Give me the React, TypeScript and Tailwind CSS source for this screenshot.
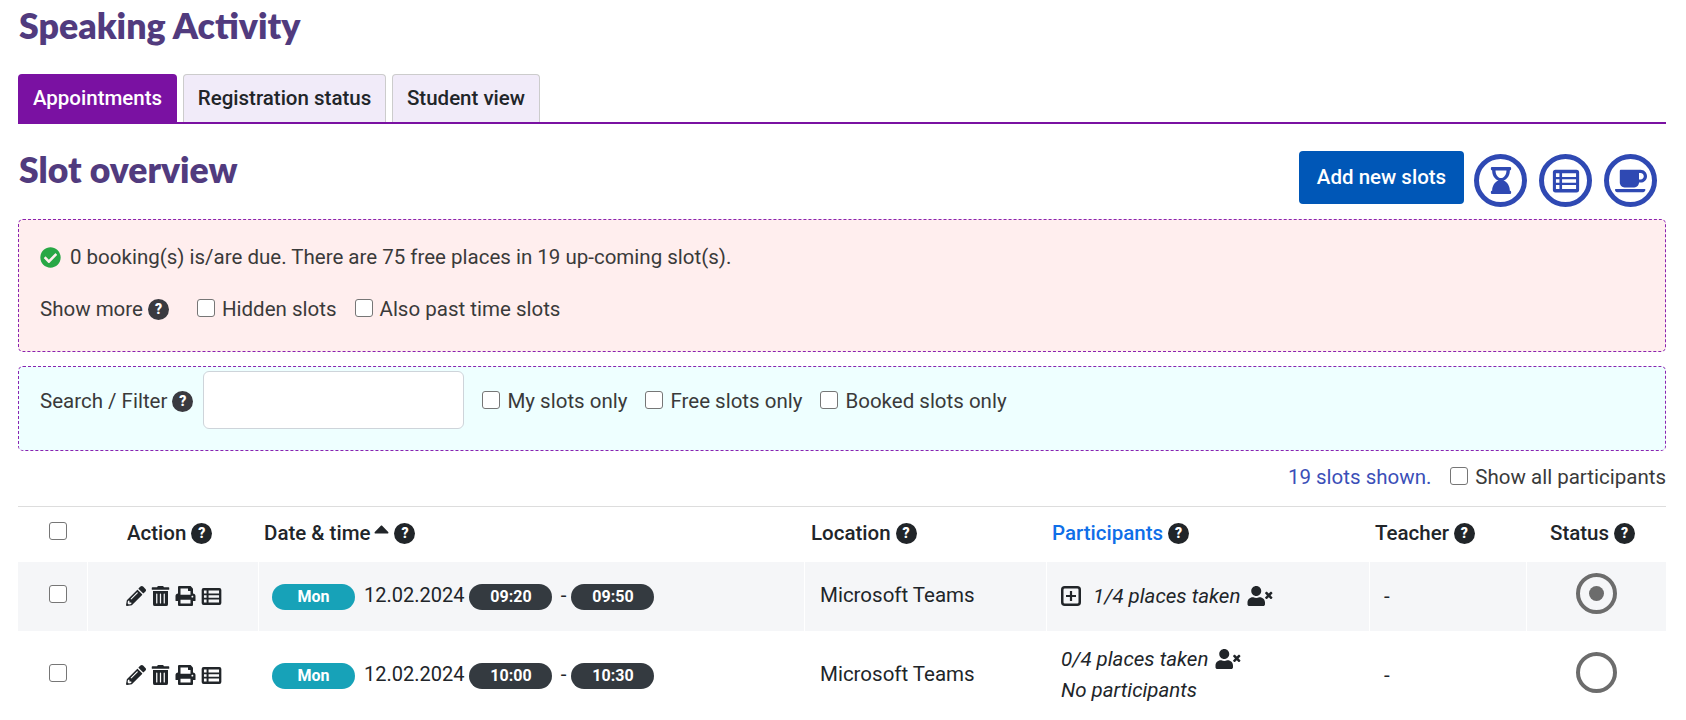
import React from 'react';
import {
  FaCheckCircle,
  FaCoffee,
  FaHourglassEnd,
  FaPencilAlt,
  FaPrint,
  FaTrashAlt,
  FaUserTimes,
  FaCaretUp,
} from 'react-icons/fa';

const TableIcon: React.FC<{ className?: string }> = ({ className }) => (
  <svg viewBox="0 0 512 512" className={className} fill="currentColor">
    <path
      fillRule="evenodd"
      d="M64 48h384a48 48 0 0 1 48 48v320a48 48 0 0 1-48 48H64a48 48 0 0 1-48-48V96a48 48 0 0 1 48-48zM72 112v72h64v-72zM184 112v72h256v-72zM72 224v64h64v-64zM184 224v64h256v-64zM72 328v72h64v-72zM184 328v72h256v-72z"
    />
  </svg>
);

const PlusBox: React.FC = () => (
  <svg viewBox="0 0 20 20" className="w-[20px] h-[20px] mr-[12px] shrink-0" fill="none" stroke="currentColor">
    <rect x="1.25" y="1.25" width="17.5" height="17.5" rx="2.5" strokeWidth="2.5" />
    <path d="M10 5v10M5 10h10" strokeWidth="2.2" />
  </svg>
);

const Check: React.FC = () => (
  <input
    type="checkbox"
    className="appearance-none w-[18px] h-[18px] shrink-0 bg-white border border-[#767676] rounded-[3px]"
  />
);

const Help: React.FC<{ dark?: boolean }> = ({ dark }) => (
  <span
    className={`w-[21px] h-[21px] shrink-0 rounded-full flex items-center justify-center text-white not-italic font-black text-[14px] leading-none ${
      dark ? 'bg-[#212529]' : 'bg-[#3a3a40]'
    }`}
  >
    ?
  </span>
);

const CheckLabel: React.FC<{ label: string }> = ({ label }) => (
  <label className="flex items-center gap-[7px]">
    <span className="flex mb-[3px]">
      <Check />
    </span>
    <span>{label}</span>
  </label>
);

const RoundIcon: React.FC<{ children: React.ReactNode }> = ({ children }) => (
  <div className="w-[53px] h-[53px] rounded-full border-[5px] border-[#2f49b3] text-[#2f49b3] flex items-center justify-center">
    {children}
  </div>
);

const Pill: React.FC<{ text: string; teal?: boolean }> = ({ text, teal }) => (
  <span
    className={`w-[83px] h-[26px] rounded-full flex items-center justify-center text-white font-bold text-[16px] ${
      teal ? 'bg-[#17a2b8]' : 'bg-[#343a40]'
    }`}
  >
    {text}
  </span>
);

const HeaderCell: React.FC<{ label: string; className?: string; children?: React.ReactNode; blue?: boolean }> = ({
  label,
  className,
  children,
  blue,
}) => (
  <div className={`flex items-center font-medium pb-[3px] ${className ?? ''}`}>
    <span className={`mb-[1px] ${blue ? 'text-[#0f6fe8]' : ''}`}>{label}</span>
    {children}
    <span className="ml-[5px]">
      <Help dark />
    </span>
  </div>
);

type Slot = {
  from: string;
  to: string;
  taken: string;
  open: boolean;
};

const SlotRow: React.FC<{ slot: Slot; shaded?: boolean; heightClass: string }> = ({ slot, shaded, heightClass }) => (
  <div className={`grid grid-cols-[70px_171px_546px_242px_323px_157px_139px] ${heightClass} ${shaded ? 'bg-[#f5f6f8]' : 'border-b border-[#eeeeee]'} text-[#212529]`}>
    <div className="flex items-center pl-[31px] pb-[5px] border-r border-white">
      <Check />
    </div>
    <div className="flex items-center pl-[38px] gap-[5px] pb-[1px] border-r border-white">
      <FaPencilAlt className="w-[20px] h-[20px]" />
      <FaTrashAlt className="w-[19px] h-[20px]" />
      <FaPrint className="w-[21px] h-[20px]" />
      <TableIcon className="w-[21px] h-[21px]" />
    </div>
    <div className="flex items-center pl-[13px] border-r border-white">
      <Pill text="Mon" teal />
      <span className="ml-[9px] mr-[5px] mb-[3px] text-[20px]">12.02.2024</span>
      <Pill text={slot.from} />
      <span className="w-[19px] pl-[3px] text-center mb-[3px]">-</span>
      <Pill text={slot.to} />
    </div>
    <div className="flex items-center pl-[15px] pb-[3px] border-r border-white">Microsoft Teams</div>
    <div className="flex items-center pl-[14px] pb-[2px] italic border-r border-white">
      {shaded ? (
        <>
          <PlusBox />
          <span>{slot.taken}</span>
          <FaUserTimes className="w-[26px] h-[20px] ml-[7px]" />
        </>
      ) : (
        <div className="flex flex-col gap-[7px]">
          <div className="flex items-center">
            <span>{slot.taken}</span>
            <FaUserTimes className="w-[26px] h-[20px] ml-[7px]" />
          </div>
          <span>No participants</span>
        </div>
      )}
    </div>
    <div className="flex items-center pl-[14px] pb-[2px] border-r border-white">-</div>
    <div className="flex items-center pl-[49px] pb-[7px]">
      <div className="w-[41px] h-[41px] rounded-full border-[4px] border-[#6c6c6c] flex items-center justify-center">
        {slot.open && <div className="w-[15px] h-[15px] rounded-full bg-[#6c6c6c]" />}
      </div>
    </div>
  </div>
);

const slots: Slot[] = [
  { from: '09:20', to: '09:50', taken: '1/4 places taken', open: true },
  { from: '10:00', to: '10:30', taken: '0/4 places taken', open: false },
];

const App: React.FC = () => {
  return (
    <div className="w-[1686px] h-[720px] overflow-hidden bg-white pl-[18px] pr-[20px] font-['Roboto',sans-serif] text-[20.5px] leading-[24px] text-[#3a3a3a]">
      <h1 className="h-[74px] pt-[5px] pl-[1px] font-['Lato',sans-serif] font-extrabold text-[35.7px] leading-[42px] text-[#513b7e]">
        Speaking Activity
      </h1>

      {/* Tabs */}
      <div className="flex gap-[6px] h-[50px] border-b-2 border-[#7a11a2] font-medium text-[#212529]">
        <div className="w-[159px] h-[48px] flex items-center justify-center bg-[#7a11a2] text-white rounded-t-[4px]">
          Appointments
        </div>
        <div className="w-[203px] h-[48px] pb-[2px] flex items-center justify-center bg-[#f1ebf9] border border-b-0 border-[#cccccc] rounded-t-[4px]">
          Registration status
        </div>
        <div className="w-[148px] h-[48px] pb-[2px] flex items-center justify-center bg-[#f1ebf9] border border-b-0 border-[#cccccc] rounded-t-[4px]">
          Student view
        </div>
      </div>

      {/* Heading with actions */}
      <div className="flex justify-between h-[95px] pt-[27px]">
        <h2 className="pl-[1px] font-['Lato',sans-serif] font-extrabold text-[35.5px] leading-[40px] text-[#513b7e] -mt-[1px]">
          Slot overview
        </h2>
        <div className="flex items-start mr-[9px]">
          <button className="w-[165px] h-[53px] pb-[2px] bg-[#0057b7] rounded-[4px] text-white font-medium">
            Add new slots
          </button>
          <div className="flex gap-[12px] ml-[10px] mt-[3px]">
            <RoundIcon>
              <FaHourglassEnd className="w-[24px] h-[27px]" />
            </RoundIcon>
            <RoundIcon>
              <TableIcon className="w-[28px] h-[28px]" />
            </RoundIcon>
            <RoundIcon>
              <FaCoffee className="w-[32px] h-[28px]" />
            </RoundIcon>
          </div>
        </div>
      </div>

      {/* Summary */}
      <div className="h-[133px] bg-[#ffeeee] border border-dashed border-[#8a22b0] rounded-[5px] pl-[21px] pt-[25px]">
        <div className="flex items-center h-[24px]">
          <FaCheckCircle className="w-[21px] h-[21px] text-[#28a745] mr-[9px]" />
          <span>0 booking(s) is/are due. There are 75 free places in 19 up-coming slot(s).</span>
        </div>
        <div className="flex items-center h-[24px] mt-[28px]">
          <span className="mr-[5px]">Show more</span>
          <Help />
          <div className="flex gap-[18px] ml-[28px]">
            <CheckLabel label="Hidden slots" />
            <CheckLabel label="Also past time slots" />
          </div>
        </div>
      </div>

      {/* Filter */}
      <div className="h-[85px] mt-[14px] mb-[1px] bg-[#eeffff] border border-dashed border-[#8a22b0] rounded-[5px] pl-[21px] pt-[5px] flex items-start">
        <div className="flex items-center h-[58px]">
          <span className="mr-[5px]">Search / Filter</span>
          <Help />
          <input className="w-[261px] h-[58px] ml-[10px] mb-[2px] bg-white border border-[#ced4da] rounded-[6px]" />
          <div className="flex gap-[18px] ml-[18px]">
            <CheckLabel label="My slots only" />
            <CheckLabel label="Free slots only" />
            <CheckLabel label="Booked slots only" />
          </div>
        </div>
      </div>

      <div className="flex justify-end items-center h-[55px] pb-[4px] border-b border-[#dddddd]">
        <span className="text-[#3b4fb8] mr-[19px]">19 slots shown.</span>
        <CheckLabel label="Show all participants" />
      </div>

      {/* Slots */}
      <div className="grid grid-cols-[70px_171px_546px_242px_323px_157px_139px] h-[55px] text-[#212529]">
        <div className="flex items-center pl-[31px] pb-[8px]">
          <Check />
        </div>
        <HeaderCell label="Action" className="pl-[39px]" />
        <HeaderCell label="Date & time" className="pl-[5px]">
          <FaCaretUp className="w-[15px] h-[24px] ml-[4px] mb-[8px]" />
        </HeaderCell>
        <HeaderCell label="Location" className="pl-[6px]" />
        <HeaderCell label="Participants" className="pl-[5px]" blue />
        <HeaderCell label="Teacher" className="pl-[5px]" />
        <HeaderCell label="Status" className="pl-[23px]" />
      </div>
      <SlotRow slot={slots[0]} shaded heightClass="h-[69px]" />
      <SlotRow slot={slots[1]} heightClass="h-[90px]" />
    </div>
  );
};

export default App;
